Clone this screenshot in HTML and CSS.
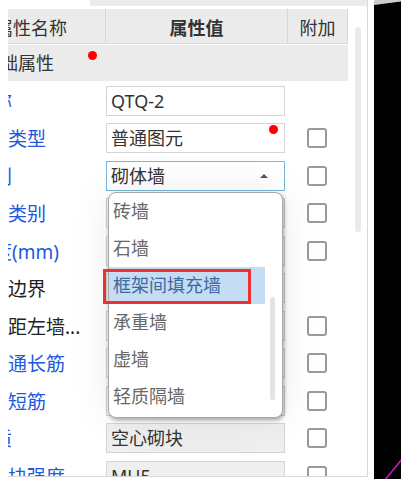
FILE: index.html
```html
<!DOCTYPE html>
<html lang="zh-CN">
<head>
<meta charset="utf-8">
<title>属性列表</title>
<link rel="stylesheet" href="styles.css">
</head>
<body>
<div class="screen">
  <div class="edge"></div>
  <div class="panel">
    <div class="tabbar"><div class="tab-on"></div><div class="tab-rest"></div></div>
    <div class="content">
      <div class="table">
        <div class="head">
          <div class="hc hc-name">属性名称</div>
          <div class="hc hc-val">属性值</div>
          <div class="hc">附加</div>
        </div>
        <div class="section">基础属性<span class="req sec-req"></span></div>
        <div class="rows">
          <div class="row">
            <div class="lbl short">名称</div>
            <div class="box">QTQ-2</div>
            <div></div>
          </div>
          <div class="row">
            <div class="lbl">图元类型</div>
            <div class="box">普通图元<span class="req box-req"></span></div>
            <div class="chk"></div>
          </div>
          <div class="row">
            <div class="lbl short">类别</div>
            <div class="box combo"><span>砌体墙</span><span class="arrow"></span></div>
            <div class="chk"></div>
          </div>
          <div class="row">
            <div class="lbl">结构类别</div>
            <div class="box"></div>
            <div class="chk"></div>
          </div>
          <div class="row">
            <div class="lbl short">厚度(mm)</div>
            <div class="box"></div>
            <div class="chk"></div>
          </div>
          <div class="row">
            <div class="lbl plain">内外边界</div>
            <div class="box"></div>
            <div></div>
          </div>
          <div class="row">
            <div class="lbl plain">轴线距左墙...</div>
            <div class="box"></div>
            <div class="chk"></div>
          </div>
          <div class="row">
            <div class="lbl">砌体通长筋</div>
            <div class="box"></div>
            <div class="chk"></div>
          </div>
          <div class="row">
            <div class="lbl">横向短筋</div>
            <div class="box"></div>
            <div class="chk"></div>
          </div>
          <div class="row">
            <div class="lbl short">材质</div>
            <div class="box off">空心砌块</div>
            <div class="chk"></div>
          </div>
          <div class="row">
            <div class="lbl">砌体块强度</div>
            <div class="box off">MU5</div>
            <div class="chk"></div>
          </div>
        </div>
      </div>
      <div class="vscroll"><div class="track"></div></div>
    </div>
  </div>
  <div class="dark">
    <svg width="27" height="479" viewBox="0 0 27 479">
      <polygon points="0,0 27,0 27,1.5 0,5" fill="#cdcdcd"/>
      <line x1="11" y1="480" x2="28" y2="459" stroke="#c01cc0" stroke-width="1.6"/>
    </svg>
  </div>

  <div class="dropdown">
    <div class="opts">
      <div class="opt">砖墙</div>
      <div class="opt">石墙</div>
      <div class="opt sel">框架间填充墙</div>
      <div class="opt">承重墙</div>
      <div class="opt">虚墙</div>
      <div class="opt">轻质隔墙</div>
    </div>
    <div class="dd-bar"></div>
  </div>
  <div class="mark"></div>
</div>
</body>
</html>
```

FILE: styles.css
```css
* { box-sizing: border-box; }
html, body { margin: 0; padding: 0; }
body {
  width: 401px;
  height: 479px;
  overflow: hidden;
  background: #fff;
  font-family: "Noto Sans", "Noto Sans CJK SC", sans-serif;
  color: #333;
}
.screen {
  position: relative;
  display: flex;
  width: 401px;
  height: 479px;
}
.edge { width: 8px; flex: none; }
.panel {
  width: 360px;
  height: 477px;
  flex: none;
  display: flex;
  flex-direction: column;
  overflow: hidden;
  border-right: 1px solid #d9d9d9;
  border-bottom: 1px solid #d9d9d9;
}
.tabbar { display: flex; height: 6px; flex: none; }
.tab-on { width: 82px; background: #fff; }
.tab-rest { flex: 1; background: #ebebeb; }
.content { display: flex; margin-top: 3px; flex: 1; min-height: 0; }
.table { width: 340px; flex: none; }

.head {
  display: grid;
  grid-template-columns: 98px 182px 60px;
  height: 35px;
  background: #ebebeb;
  border-bottom: 1px solid #dadada;
  font-size: 18px;
}
.hc {
  height: 34px;
  padding-top: 6px;
  line-height: 26px;
  text-align: center;
  white-space: nowrap;
  overflow: hidden;
  border-right: 1px solid #d6d6d6;
}
.hc-name { text-align: left; text-indent: -13px; }
.hc-val { font-weight: bold; }

.section {
  position: relative;
  height: 36px;
  margin-top: 1px;
  background: #ebebeb;
  font-size: 18px;
  line-height: 36px;
  text-indent: -26px;
  white-space: nowrap;
}
.req {
  position: absolute;
  width: 9px;
  height: 9px;
  border-radius: 50%;
  background: #f00;
}
.sec-req { left: 80px; top: 6px; }
.box-req { left: 162px; top: 1px; }

.rows { margin-top: 1px; }
.row {
  display: grid;
  grid-template-columns: 98px 182px 60px;
  height: 37.5px;
  align-items: center;
}
.lbl {
  font-size: 19px;
  white-space: nowrap;
  overflow: hidden;
  text-indent: -38px;
  color: #2058e0;
}
.lbl.short { text-indent: -34px; }
.lbl.plain { color: #222; }

.box {
  position: relative;
  width: 179px;
  height: 30px;
  border: 1px solid #d4d4d4;
  background: #fff;
  font-size: 18px;
  line-height: 28px;
  padding-left: 4px;
  white-space: nowrap;
  color: #333;
}
.box.off { background: #efefef; }
.box.combo {
  display: flex;
  align-items: center;
  justify-content: space-between;
  padding-right: 16px;
  border-color: #78b8dc;
}
.arrow {
  width: 0;
  height: 0;
  border-left: 4px solid transparent;
  border-right: 4px solid transparent;
  border-bottom: 4px solid #555;
}
.chk {
  width: 20px;
  height: 20px;
  margin-left: 19px;
  border: 2px solid #9a9a9a;
  border-radius: 3px;
  background: #fff;
}

.vscroll { width: 19px; padding: 18px 0 0 7px; }
.track { width: 6px; height: 205px; background: #ebebeb; border-radius: 3px; }

.dark {
  width: 27px;
  flex: none;
  margin-left: 6px;
  background: #000;
}
.dark svg { display: block; }

.dropdown {
  position: absolute;
  left: 108px;
  top: 192px;
  width: 175px;
  height: 226px;
  display: flex;
  background: #fff;
  border: 1px solid #a9a9a9;
  border-radius: 8px;
  overflow: hidden;
  box-shadow: 1px 2px 4px rgba(0, 0, 0, 0.35), 0 0 40px rgba(0, 0, 0, 0.08);
}
.opts { width: 156px; flex: none; }
.opt {
  height: 37px;
  line-height: 37px;
  padding-left: 4px;
  font-size: 18px;
  color: #686868;
  white-space: nowrap;
}
.opt.sel { background: #c5dcf2; color: #3c6aa0; }
.dd-bar {
  width: 5px;
  height: 103px;
  margin: 104px 0 0 5px;
  background: #e4e4e4;
  border-radius: 3px;
}
.mark {
  position: absolute;
  left: 103px;
  top: 269px;
  width: 148px;
  height: 35px;
  border: 3px solid #ee3030;
}
```
